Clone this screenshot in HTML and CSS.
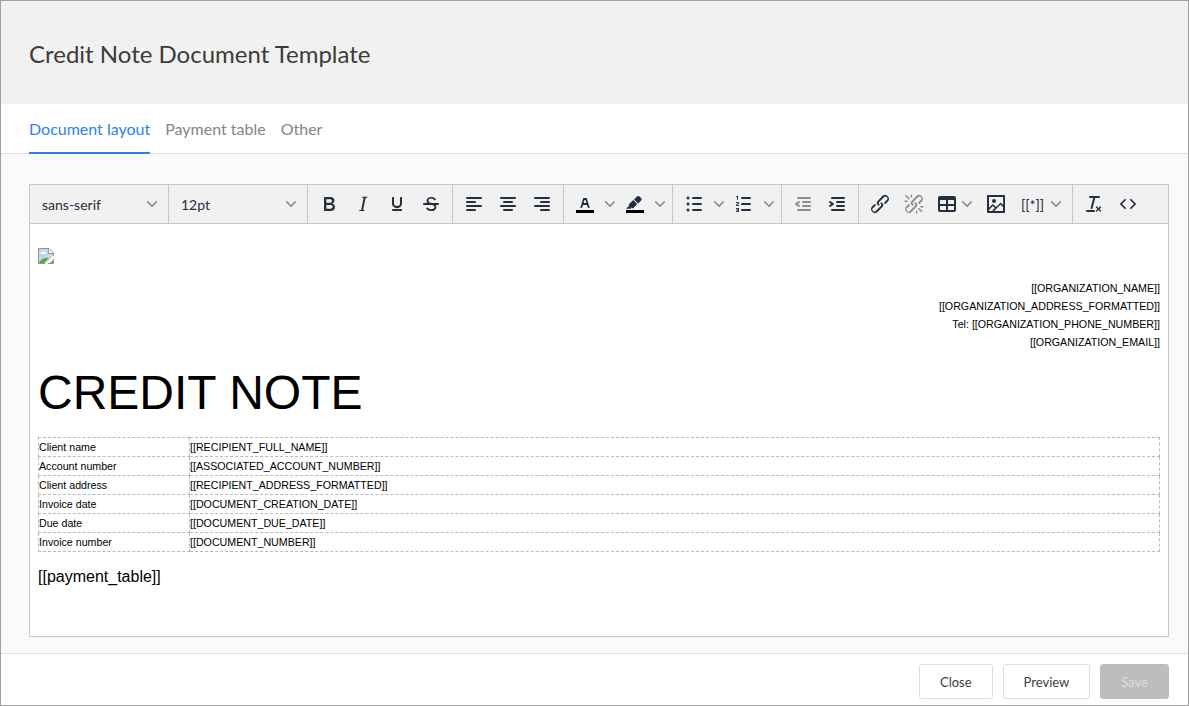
FILE: index.html
```html
<!DOCTYPE html>
<html lang="en">
<head>
    <meta charset="UTF-8">
    <meta name="viewport" content="width=device-width, initial-scale=1.0">
    <title>Credit Note Document Template</title>
    <link rel="stylesheet" href="styles.css">
</head>
<body>
    <svg class="icon-defs" aria-hidden="true">
        <symbol id="chevron" viewBox="0 0 10 10"><path d="M8.7 2.2c.3-.3.8-.3 1 0 .4.4.4.9 0 1.2L5.7 7.8c-.3.3-.9.3-1.2 0L.2 3.4a.8.8 0 0 1 0-1.2c.3-.3.8-.3 1.1 0L5 6l3.7-3.8z"/></symbol>
        <symbol id="link" viewBox="0 0 24 24"><path d="M6.2 12.3a1 1 0 0 1 1.4 1.4l-2.1 2a2 2 0 1 0 2.7 2.8l4.8-4.8a1 1 0 0 0 0-1.4 1 1 0 1 1 1.4-1.3 2.9 2.9 0 0 1 0 4L9.6 20a3.9 3.9 0 0 1-5.5-5.5l2-2zm11.6-.6a1 1 0 0 1-1.4-1.4l2-2a2 2 0 1 0-2.6-2.8L11 10.3a1 1 0 0 0 0 1.4A1 1 0 1 1 9.6 13a2.9 2.9 0 0 1 0-4L14.4 4a3.9 3.9 0 0 1 5.5 5.5l-2 2z"/></symbol>
    </svg>
    <div class="dialog">
        <header class="dialog-header">
            <h1>Credit Note Document Template</h1>
        </header>
        <nav class="tabs">
            <a href="#layout" class="tab active">Document layout</a>
            <a href="#payment" class="tab">Payment table</a>
            <a href="#other" class="tab">Other</a>
        </nav>
        <main class="dialog-body">
            <div class="editor">
                <div class="toolbar">
                    <div class="group">
                        <div class="select-box">
                            <select aria-label="Font"><option>sans-serif</option></select>
                            <svg class="chevron"><use href="#chevron"/></svg>
                        </div>
                    </div>
                    <div class="group">
                        <div class="select-box">
                            <select aria-label="Font size"><option>12pt</option></select>
                            <svg class="chevron"><use href="#chevron"/></svg>
                        </div>
                    </div>
                    <div class="group">
                        <button class="tool" aria-label="Bold"><svg class="icon" viewBox="0 0 24 24"><path fill-rule="evenodd" d="M7.8 19c-.3 0-.5 0-.6-.2l-.2-.5V5.7c0-.2 0-.4.2-.5l.6-.2h5c1.5 0 2.7.3 3.5 1 .7.6 1.1 1.4 1.1 2.5a3 3 0 0 1-.6 1.9c-.4.6-1 1-1.6 1.2.4.1.9.3 1.3.6s.8.7 1 1.2c.4.4.5 1 .5 1.6 0 1.3-.4 2.3-1.3 3-.8.7-2.1 1-3.8 1H7.8zm5-8.3c.6 0 1.2-.1 1.6-.5.4-.3.6-.7.6-1.3 0-1.1-.8-1.7-2.3-1.7H9.3v3.5h3.4zm.5 6c.7 0 1.3-.1 1.7-.4.4-.4.6-.9.6-1.5s-.2-1-.7-1.4c-.4-.3-1-.4-2-.4H9.4v3.8h4z"/></svg></button>
                        <button class="tool" aria-label="Italic"><svg class="icon" viewBox="0 0 24 24"><path d="M16.7 4.7l-.1.9h-.3c-.6 0-1 0-1.4.3-.3.3-.4.6-.5 1.1l-2.1 9.8v.6c0 .5.4.8 1.4.8h.2l-.2.8H8l.2-.8h.2c1.1 0 1.8-.5 2-1.5l2-9.8.1-.5c0-.6-.4-.8-1.4-.8h-.3l.2-.9h5.8z"/></svg></button>
                        <button class="tool" aria-label="Underline"><svg class="icon" viewBox="0 0 24 24"><path d="M16 5c.6 0 1 .4 1 1v5.5a4 4 0 0 1-.4 1.8l-1 1.4a5.3 5.3 0 0 1-5.5 1 5 5 0 0 1-1.6-1c-.5-.4-.8-.9-1.1-1.4a4 4 0 0 1-.4-1.8V6c0-.6.4-1 1-1s1 .4 1 1v5.5c0 .3 0 .6.2 1l.6.7a3.3 3.3 0 0 0 2.2.8 3.4 3.4 0 0 0 2.2-.8c.3-.2.4-.5.6-.8l.2-.9V6c0-.6.4-1 1-1zM8 17h8c.6 0 1 .4 1 1s-.4 1-1 1H8a1 1 0 0 1 0-2z"/></svg></button>
                        <button class="tool" aria-label="Strikethrough"><svg class="icon" viewBox="0 0 24 24"><path d="M15.6 8.5c-.5-.7-1-1.1-1.3-1.3-.6-.4-1.3-.6-2-.6-2.7 0-2.8 1.7-2.8 2.1 0 1.6 1.8 2 3.2 2.3 4.4.9 4.6 2.8 4.6 3.9 0 1.4-.7 4.1-5 4.1A6.2 6.2 0 0 1 7 16.4l1.5-1.1c.4.6 1.6 2 3.7 2 1.6 0 2.5-.4 3-1.2.4-.8.3-2-.8-2.6-.7-.4-1.6-.7-2.9-1-1-.2-3.9-.8-3.9-3.6C7.6 6 10.3 5 12.4 5c2.9 0 4.2 1.6 4.7 2.4l-1.5 1.1z"/><path d="M5 11h14a1 1 0 0 1 0 2H5a1 1 0 0 1 0-2z"/></svg></button>
                    </div>
                    <div class="group">
                        <button class="tool" aria-label="Align left"><svg class="icon" viewBox="0 0 24 24"><path d="M5 5h14a1 1 0 0 1 0 2H5a1 1 0 0 1 0-2zm0 4h8a1 1 0 0 1 0 2H5a1 1 0 0 1 0-2zm0 8h8a1 1 0 0 1 0 2H5a1 1 0 0 1 0-2zm0-4h14a1 1 0 0 1 0 2H5a1 1 0 0 1 0-2z"/></svg></button>
                        <button class="tool" aria-label="Align center"><svg class="icon" viewBox="0 0 24 24"><path d="M5 5h14a1 1 0 0 1 0 2H5a1 1 0 0 1 0-2zm3 4h8a1 1 0 0 1 0 2H8a1 1 0 0 1 0-2zm0 8h8a1 1 0 0 1 0 2H8a1 1 0 0 1 0-2zm-3-4h14a1 1 0 0 1 0 2H5a1 1 0 0 1 0-2z"/></svg></button>
                        <button class="tool" aria-label="Align right"><svg class="icon" viewBox="0 0 24 24"><path d="M5 5h14a1 1 0 0 1 0 2H5a1 1 0 0 1 0-2zm6 4h8a1 1 0 0 1 0 2h-8a1 1 0 0 1 0-2zm0 8h8a1 1 0 0 1 0 2h-8a1 1 0 0 1 0-2zm-6-4h14a1 1 0 0 1 0 2H5a1 1 0 0 1 0-2z"/></svg></button>
                    </div>
                    <div class="group">
                        <button class="tool" aria-label="Text color"><svg class="icon" viewBox="0 0 24 24"><path class="swatch" d="M3 18h18v3H3z"/><path fill-rule="evenodd" d="M8.7 16h-.8a.5.5 0 0 1-.5-.6l2.7-9c.1-.3.3-.4.5-.4h2.8c.2 0 .4.1.5.4l2.7 9a.5.5 0 0 1-.5.6h-.8a.5.5 0 0 1-.4-.4l-.7-2.2c0-.3-.3-.4-.5-.4h-3.4c-.2 0-.4.1-.5.4l-.7 2.2c0 .3-.2.4-.4.4zm2.6-7.6l-.6 2a.5.5 0 0 0 .5.6h1.6a.5.5 0 0 0 .5-.6l-.6-2c0-.3-.3-.4-.5-.4h-.4c-.2 0-.4.1-.5.4z"/></svg></button>
                        <button class="tool-arrow" aria-label="Text color menu"><svg class="chevron"><use href="#chevron"/></svg></button>
                        <button class="tool" aria-label="Background color"><svg class="icon" viewBox="0 0 24 24"><path class="swatch" d="M3 18h18v3H3z"/><path d="M7.7 16.7H3l3.3-3.3-.7-.8L10.2 8l4 4.1-4 4.2c-.2.2-.6.2-.8 0l-.6-.7-1.1 1.1zm5-7.5L11 7.4l3-2.9a2 2 0 0 1 2.6 0L18 6c.7.7.7 2 0 2.7l-2.9 2.9-1.8-1.8-.5-.6"/></svg></button>
                        <button class="tool-arrow" aria-label="Background color menu"><svg class="chevron"><use href="#chevron"/></svg></button>
                    </div>
                    <div class="group">
                        <button class="tool" aria-label="Bullet list"><svg class="icon" viewBox="0 0 24 24"><path d="M11 5h8a1 1 0 0 1 0 2h-8a1 1 0 0 1 0-2zm0 6h8a1 1 0 0 1 0 2h-8a1 1 0 0 1 0-2zm0 6h8a1 1 0 0 1 0 2h-8a1 1 0 0 1 0-2z"/><circle cx="6" cy="6" r="1.5"/><circle cx="6" cy="12" r="1.5"/><circle cx="6" cy="18" r="1.5"/></svg></button>
                        <button class="tool-arrow" aria-label="Bullet list menu"><svg class="chevron"><use href="#chevron"/></svg></button>
                        <button class="tool" aria-label="Numbered list"><svg class="icon" viewBox="0 0 24 24"><path d="M10 17h8a1 1 0 0 1 0 2h-8a1 1 0 0 1 0-2zm0-6h8a1 1 0 0 1 0 2h-8a1 1 0 0 1 0-2zm0-6h8a1 1 0 0 1 0 2h-8a1 1 0 0 1 0-2zM6 4v3.5c0 .3-.2.5-.5.5a.5.5 0 0 1-.5-.5V5h-.5a.5.5 0 0 1 0-1H6zm-1 8.8l.2.2h1.3c.3 0 .5.2.5.5s-.2.5-.5.5H4.9a1 1 0 0 1-.9-1V13c0-.4.3-.8.6-1l1.2-.4.2-.3a.2.2 0 0 0-.2-.2H4.5a.5.5 0 0 1-.5-.5c0-.3.2-.5.5-.5h1.6c.5 0 .9.4.9 1v.1c0 .4-.3.8-.6 1l-1.2.4-.2.3zM7 17v2c0 .6-.4 1-1 1H4.5a.5.5 0 0 1 0-1h1.2c.2 0 .3-.1.3-.3 0-.2-.1-.3-.3-.3H4.4a.4.4 0 1 1 0-.8h1.3c.2 0 .3-.1.3-.3 0-.2-.1-.3-.3-.3H4.5a.5.5 0 1 1 0-1H6c.6 0 1 .4 1 1z"/></svg></button>
                        <button class="tool-arrow" aria-label="Numbered list menu"><svg class="chevron"><use href="#chevron"/></svg></button>
                    </div>
                    <div class="group">
                        <button class="tool" aria-label="Decrease indent" disabled><svg class="icon" viewBox="0 0 24 24"><path d="M7 5h12a1 1 0 0 1 0 2H7a1 1 0 1 1 0-2zm5 4h7a1 1 0 0 1 0 2h-7a1 1 0 0 1 0-2zm0 4h7a1 1 0 0 1 0 2h-7a1 1 0 0 1 0-2zm-5 4h12a1 1 0 0 1 0 2H7a1 1 0 0 1 0-2zm1.6-3.8a1 1 0 0 1-1.2 1.6l-3-2a1 1 0 0 1 0-1.6l3-2a1 1 0 0 1 1.2 1.6L6.8 12l1.8 1.2z"/></svg></button>
                        <button class="tool" aria-label="Increase indent"><svg class="icon" viewBox="0 0 24 24"><path d="M7 5h12a1 1 0 0 1 0 2H7a1 1 0 1 1 0-2zm5 4h7a1 1 0 0 1 0 2h-7a1 1 0 0 1 0-2zm0 4h7a1 1 0 0 1 0 2h-7a1 1 0 0 1 0-2zm-5 4h12a1 1 0 0 1 0 2H7a1 1 0 0 1 0-2zm-2.6-3.8L6.2 12l-1.8-1.2a1 1 0 0 1 1.2-1.6l3 2a1 1 0 0 1 0 1.6l-3 2a1 1 0 1 1-1.2-1.6z"/></svg></button>
                    </div>
                    <div class="group">
                        <button class="tool" aria-label="Insert link"><svg class="icon"><use href="#link"/></svg></button>
                        <button class="tool" aria-label="Remove link" disabled><svg class="icon" viewBox="0 0 24 24"><use href="#link"/><path d="M7.6 6.3a.8.8 0 0 1-1 1.1L3.3 4.2a.7.7 0 1 1 1-1l3.2 3.1zM5.1 8.6a.8.8 0 0 1 0 1.5H3a.8.8 0 0 1 0-1.5H5zm5-3.5a.8.8 0 0 1-1.5 0V3a.8.8 0 0 1 1.5 0V5zm6 11.8a.8.8 0 0 1 1-1l3.2 3.2a.8.8 0 0 1-1 1L16 17zm-2.2 2a.8.8 0 0 1 1.5 0V21a.8.8 0 0 1-1.5 0V19zm5-3.5a.7.7 0 1 1 0-1.5H21a.8.8 0 0 1 0 1.5H19z"/></svg></button>
                        <button class="tool-menu" aria-label="Table"><svg class="icon" viewBox="0 0 24 24"><path fill-rule="evenodd" d="M19 4a2 2 0 0 1 2 2v12a2 2 0 0 1-2 2H5a2 2 0 0 1-2-2V6c0-1.1.9-2 2-2h14zM5 14v4h6v-4H5zm14 0h-6v4h6v-4zm0-6h-6v4h6V8zM5 12h6V8H5v4z"/></svg><svg class="chevron"><use href="#chevron"/></svg></button>
                        <button class="tool" aria-label="Insert image"><svg class="icon" viewBox="0 0 24 24"><path fill-rule="evenodd" d="M5 15.7l3.3-3.2c.3-.3.7-.3 1 0L12 15l4.1-4c.3-.4.8-.4 1 0l2 1.9V5H5v10.7zM5 18V19h3l2.8-2.9-2-2L5 17.9zm14-3l-2.5-2.4-6.4 6.5H19v-4zM4 3h16c.6 0 1 .4 1 1v16c0 .6-.4 1-1 1H4a1 1 0 0 1-1-1V4c0-.6.4-1 1-1z"/><circle cx="10" cy="9" r="2"/></svg></button>
                        <button class="tool-menu placeholder">[[*]]<svg class="chevron"><use href="#chevron"/></svg></button>
                    </div>
                    <div class="group">
                        <button class="tool" aria-label="Clear formatting"><svg class="icon" viewBox="0 0 24 24"><path d="M13.2 6a1 1 0 0 1 0 .2l-2.6 10a1 1 0 0 1-1 .8h-.2a.8.8 0 0 1-.8-1l2.6-10H8a1 1 0 1 1 0-2h9a1 1 0 0 1 0 2h-3.8zM5 18h7a1 1 0 0 1 0 2H5a1 1 0 0 1 0-2zm13 1.5L16.5 18 15 19.5a.7.7 0 0 1-1-1l1.5-1.5-1.5-1.5a.7.7 0 0 1 1-1l1.5 1.5 1.5-1.5a.7.7 0 0 1 1 1L17.5 17l1.5 1.5a.7.7 0 0 1-1 1z"/></svg></button>
                        <button class="tool" aria-label="Source code"><svg class="icon" viewBox="0 0 24 24"><path d="M9.8 15.7c.3.3.3.8 0 1-.3.4-.9.4-1.2 0l-4.4-4.1a.8.8 0 0 1 0-1.2l4.4-4.2c.3-.3.9-.3 1.2 0 .3.3.3.8 0 1.1L6 12l3.8 3.7zM14.2 15.7c-.3.3-.3.8 0 1 .4.4.9.4 1.2 0l4.4-4.1c.3-.3.3-.8 0-1.2l-4.4-4.2a.8.8 0 0 0-1.2 0c-.3.3-.3.8 0 1.1L18 12l-3.8 3.7z"/></svg></button>
                    </div>
                </div>
                <div class="document">
                    <svg class="missing-image" viewBox="0 0 16 16" role="img" aria-label="Logo">
                        <path fill="#c3d5f5" d="M1 1h10v4h4v3L8 15H1z"/>
                        <path fill="#fff" d="M3 6a1.5 1.5 0 0 1 1-2 2 2 0 0 1 3 0 1.5 1.5 0 0 1 1 2z"/>
                        <path fill="#53ad32" d="M1 15c1-3 4-5 7-5h3l-5 5zM12 15l3-3v3z"/>
                        <path fill="#fff" d="M11 1l4 4h-4z"/>
                        <path fill="none" stroke="#959595" d="M7 15.5H.5V.5H11l4.5 4.5v3M10.5.5v5h5M15.5 11v4.5H10"/>
                    </svg>
                    <div class="organization">
                        <div>[[ORGANIZATION_NAME]]</div>
                        <div>[[ORGANIZATION_ADDRESS_FORMATTED]]</div>
                        <div>Tel: [[ORGANIZATION_PHONE_NUMBER]]</div>
                        <div>[[ORGANIZATION_EMAIL]]</div>
                    </div>
                    <p class="doc-title">CREDIT NOTE</p>
                    <table class="details">
                        <tr><td class="name">Client name</td><td>[[RECIPIENT_FULL_NAME]]</td></tr>
                        <tr><td class="name">Account number</td><td>[[ASSOCIATED_ACCOUNT_NUMBER]]</td></tr>
                        <tr><td class="name">Client address</td><td>[[RECIPIENT_ADDRESS_FORMATTED]]</td></tr>
                        <tr><td class="name">Invoice date</td><td>[[DOCUMENT_CREATION_DATE]]</td></tr>
                        <tr><td class="name">Due date</td><td>[[DOCUMENT_DUE_DATE]]</td></tr>
                        <tr><td class="name">Invoice number</td><td>[[DOCUMENT_NUMBER]]</td></tr>
                    </table>
                    <p class="payment">[[payment_table]]</p>
                </div>
            </div>
        </main>
        <footer class="dialog-footer">
            <button class="btn">Close</button>
            <button class="btn">Preview</button>
            <button class="btn btn-save" disabled>Save</button>
        </footer>
    </div>
</body>
</html>
```
FILE: styles.css
```css
*{
    box-sizing: border-box;
}
body{
    margin:0;
    font-family: Lato, sans-serif;
    color:#3c3c3c;
}
button, select{
    font-family: inherit;
    border:none;
    background:transparent;
    padding:0;
}
.icon-defs{
    display:none;
}
.dialog{
    display:flex;
    flex-direction:column;
    min-height:100vh;
    border:1px solid #a0a0a0;
    background-color:#fff;
}
.dialog-header{
    padding:37px 28px 34px;
    background-color:#f1f1f1;
}
.dialog-header h1{
    margin:0;
    font-size:24px;
    line-height:32px;
    font-weight:normal;
}

/* tabs */
.tabs{
    display:flex;
    gap:15px;
    height:50px;
    padding:0 28px;
    border-bottom:1px solid #dedede;
}
.tab{
    height:50px;
    font-size:16px;
    line-height:50px;
    color:#858585;
    text-decoration:none;
}
.tab.active{
    color:#2f80ed;
    border-bottom:2px solid #2f80ed;
}

/* editor */
.dialog-body{
    display:flex;
    flex:1;
    padding:30px 19px 16px 28px;
    background-color:#fafafa;
}
.editor{
    display:flex;
    flex-direction:column;
    flex:1;
    border:1px solid #c8c8c8;
    background-color:#fff;
}
.toolbar{
    display:flex;
    height:39px;
    background-color:#f1f1f1;
    border-bottom:1px solid #c8c8c8;
}
.group{
    display:flex;
    align-items:center;
    padding:0 4px;
    border-right:1px solid #c8c8c8;
}
.group:last-child{
    border-right:none;
}
.tool, .tool-arrow, .tool-menu{
    display:flex;
    align-items:center;
    justify-content:center;
    height:34px;
    color:#222f3e;
}
.tool{
    width:34px;
}
.tool-arrow{
    width:16px;
}
.tool-menu{
    gap:3px;
    padding:0 7px 0 4px;
}
.placeholder{
    gap:7px;
    padding:0 7px 0 8px;
    font-size:14px;
}
.icon{
    width:24px;
    height:24px;
    fill:#222f3e;
}
.tool:disabled .icon{
    opacity:0.5;
}
.swatch{
    fill:#000;
}
.chevron{
    width:10px;
    height:10px;
    fill:#222f3e;
    opacity:0.5;
}
.select-box{
    display:grid;
    align-items:center;
    width:130px;
}
.select-box select, .select-box .chevron{
    grid-area:1 / 1;
}
.select-box select{
    appearance:none;
    height:34px;
    padding:0 24px 0 8px;
    font-size:14px;
    color:#222f3e;
}
.select-box .chevron{
    justify-self:end;
    margin-right:7px;
    pointer-events:none;
}

/* document */
.document{
    flex:1;
    padding:24px 8px;
    font-family:"Liberation Sans", Arial, sans-serif;
    font-size:8pt;
    line-height:18px;
    color:#000;
}
.missing-image{
    display:block;
    width:16px;
    height:16px;
}
.organization{
    margin-top:15px;
    text-align:right;
}
.doc-title{
    margin:8px 0 11px;
    font-size:48px;
    line-height:67px;
}
.details{
    width:100%;
    border-collapse:collapse;
}
.details td{
    padding:1px 0 0;
    line-height:17px;
    border:1px dashed #bbb;
}
.details .name{
    width:151px;
}
.payment{
    margin:14px 0;
    font-size:16px;
    line-height:22px;
}

/* footer */
.dialog-footer{
    display:flex;
    justify-content:flex-end;
    gap:10px;
    padding:10px 19px 6px;
    border-top:1px solid #dedede;
}
.btn{
    height:35px;
    padding:0 20px;
    font-size:13px;
    color:#3c3c3c;
    background-color:#fff;
    border:1px solid #dedede;
    border-radius:3px;
}
.btn-save{
    color:#dedede;
    background-color:#bdbdbd;
    border-color:#bdbdbd;
}
```
